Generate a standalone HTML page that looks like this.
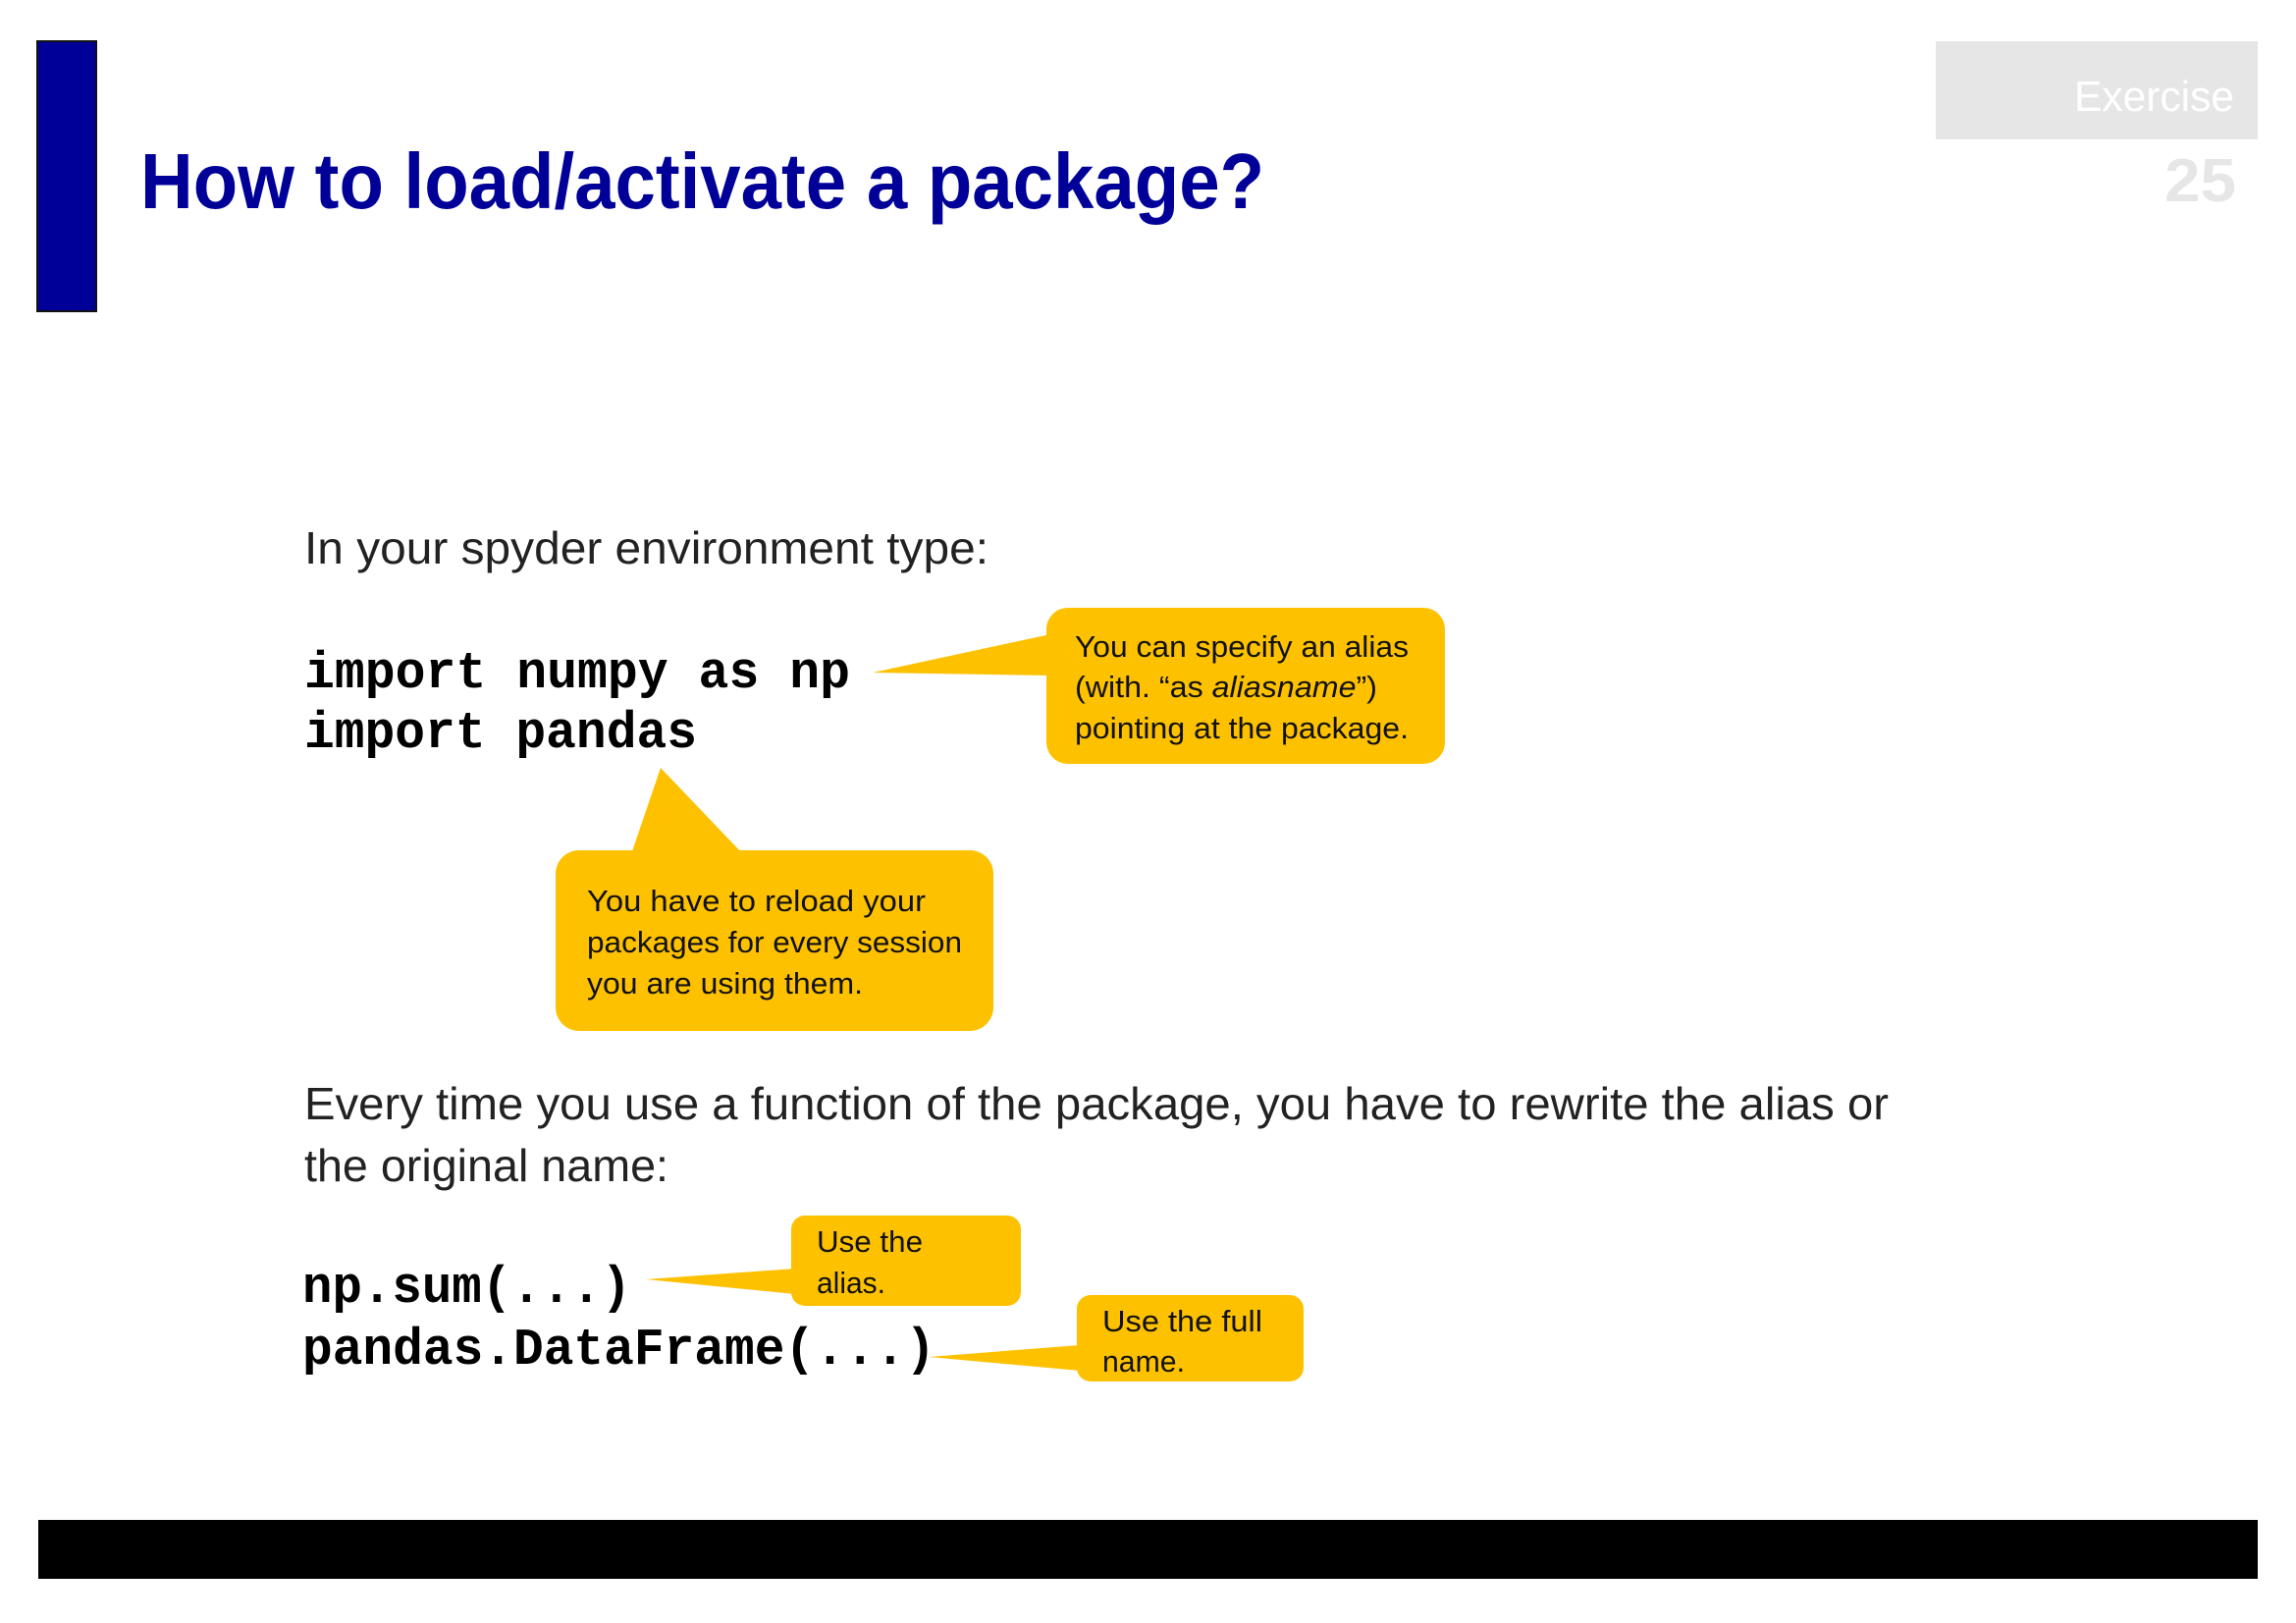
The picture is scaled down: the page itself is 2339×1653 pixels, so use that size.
<!DOCTYPE html>
<html><head><meta charset="utf-8"><style>
html,body{margin:0;padding:0;background:#fff}
svg{display:block}
</style></head><body>
<svg width="2339" height="1653" viewBox="0 0 2339 1653" xmlns="http://www.w3.org/2000/svg">
<rect x="0" y="0" width="2339" height="1653" fill="#fff"/>
<rect x="38" y="42" width="60" height="275" fill="#000099" stroke="#111" stroke-width="2"/>
<text x="143" y="212" font-family="Liberation Sans, sans-serif" font-size="80" font-weight="bold" fill="#000099" textLength="1145" lengthAdjust="spacingAndGlyphs">How to load/activate a package?</text>
<rect x="1972" y="42" width="328" height="100" fill="#e6e6e6"/>
<text x="2113" y="113" font-family="Liberation Sans, sans-serif" font-size="44" fill="#fff" textLength="163" lengthAdjust="spacingAndGlyphs">Exercise</text>
<text x="2205" y="205" font-family="Liberation Sans, sans-serif" font-size="62" font-weight="bold" fill="#e6e6e6" textLength="73" lengthAdjust="spacingAndGlyphs">25</text>

<g font-family="Liberation Sans, sans-serif" fill="#222">
<text x="310" y="574" font-size="46" textLength="697" lengthAdjust="spacingAndGlyphs">In your spyder environment type:</text>
<text x="310" y="1140" font-size="46" textLength="1614" lengthAdjust="spacingAndGlyphs">Every time you use a function of the package, you have to rewrite the alias or</text>
<text x="310" y="1203" font-size="46" textLength="371" lengthAdjust="spacingAndGlyphs">the original name:</text>
</g>

<g font-family="Liberation Mono, monospace" font-weight="bold" font-size="53" fill="#000">
<text x="310" y="700" textLength="556" lengthAdjust="spacingAndGlyphs">import numpy as np</text>
<text x="310" y="761" textLength="400" lengthAdjust="spacingAndGlyphs">import pandas</text>
<text x="308" y="1326" textLength="335" lengthAdjust="spacingAndGlyphs">np.sum(...)</text>
<text x="308" y="1389" textLength="645" lengthAdjust="spacingAndGlyphs">pandas.DataFrame(...)</text>
</g>

<g fill="#fdc100">
<rect x="1066" y="619" width="406" height="159" rx="22"/>
<polygon points="889,685 1070,646 1070,688"/>
<rect x="566" y="866" width="446" height="184" rx="24"/>
<polygon points="673,782 643,870 757,870"/>
<rect x="806" y="1238" width="234" height="92" rx="14"/>
<polygon points="658,1303 810,1292 810,1318"/>
<rect x="1097" y="1319" width="231" height="88" rx="14"/>
<polygon points="946,1382 1100,1370 1100,1396"/>
</g>

<g font-family="Liberation Sans, sans-serif" font-size="31" fill="#111">
<text x="1095" y="669" textLength="340" lengthAdjust="spacingAndGlyphs">You can specify an alias</text>
<text x="1095" y="710" textLength="308" lengthAdjust="spacingAndGlyphs">(with. “as <tspan font-style="italic">aliasname</tspan>”)</text>
<text x="1095" y="752" textLength="340" lengthAdjust="spacingAndGlyphs">pointing at the package.</text>
<text x="598" y="928" textLength="345" lengthAdjust="spacingAndGlyphs">You have to reload your</text>
<text x="598" y="970" textLength="382" lengthAdjust="spacingAndGlyphs">packages for every session</text>
<text x="598" y="1012" textLength="281" lengthAdjust="spacingAndGlyphs">you are using them.</text>
<text x="832" y="1275" textLength="108" lengthAdjust="spacingAndGlyphs">Use the</text>
<text x="832" y="1317" textLength="70" lengthAdjust="spacingAndGlyphs">alias.</text>
<text x="1123" y="1356" textLength="163" lengthAdjust="spacingAndGlyphs">Use the full</text>
<text x="1123" y="1397" textLength="84" lengthAdjust="spacingAndGlyphs">name.</text>
</g>

<rect x="39" y="1548" width="2261" height="60" fill="#000"/>
</svg>
</body></html>
